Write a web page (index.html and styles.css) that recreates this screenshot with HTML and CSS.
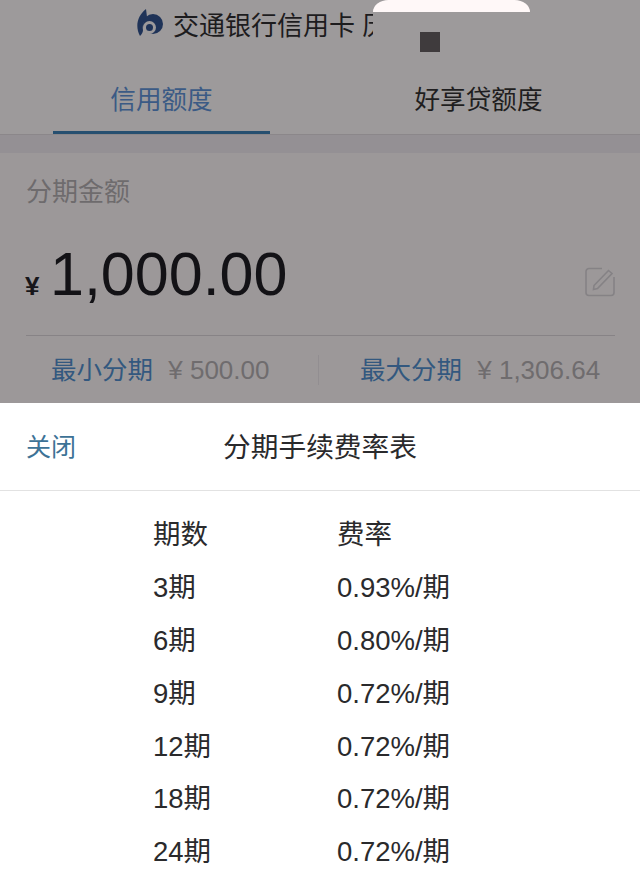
FILE: index.html
```html
<!DOCTYPE html>
<html lang="zh-CN">
<head>
  <meta charset="UTF-8" />
  <title>分期手续费率表</title>
  <link rel="stylesheet" href="styles.css">
</head>
<body>
  <div class="screen">
    <div class="backdrop">
      <div class="topbar">
        <svg class="logo" viewBox="0 0 28 28" width="28" height="28">
          <path fill="#1f3358" d="M4 27C-1 18 1 7 10 0l1 8C8 12 6 16 7 21c0 2-1 4-3 6z"/>
          <circle cx="17" cy="15" r="10" fill="#1f3358"/>
          <circle cx="13.500" cy="18.500" r="6.500" fill="#9d9a9b"/>
          <circle cx="13.500" cy="18.500" r="3.500" fill="#1f3358"/>
        </svg>
        <span class="bank-name">交通银行信用卡 历</span>
      </div>

      <div class="tabs">
        <div class="tab tab-active"><span>信用额度</span></div>
        <div class="tab tab-other"><span>好享贷额度</span></div>
      </div>

      <div class="card">
        <div class="card-label">分期金额</div>
        <div class="amount-row">
          <span class="currency">¥</span>
          <span class="amount">1,000.00</span>
          <svg class="edit-icon" viewBox="0 0 30 30" width="30" height="30" fill="none" stroke="#858285">
            <path stroke-width="1.6" d="M17 1.500H4A3 3 0 0 0 1 4.500V25.500A3 3 0 0 0 4 28.500H26A3 3 0 0 0 29 25.500V10"/>
            <path stroke-width="1.6" d="M9 18.500L23.500 3.500L27 6.500L12.500 21.500L8.500 22.500Z"/>
          </svg>
        </div>
        <div class="limits">
          <div class="limit">
            <span class="limit-name">最小分期</span>
            <span class="limit-value">¥ 500.00</span>
          </div>
          <div class="limit limit-max">
            <span class="limit-name">最大分期</span>
            <span class="limit-value">¥ 1,306.64</span>
          </div>
        </div>
      </div>
    </div>

    <div class="sheet">
      <div class="sheet-head">
        <span class="close">关闭</span>
        <span class="sheet-title">分期手续费率表</span>
      </div>
      <div class="rates">
        <div>期数</div><div>费率</div>
        <div>3期</div><div>0.93%/期</div>
        <div>6期</div><div>0.80%/期</div>
        <div>9期</div><div>0.72%/期</div>
        <div>12期</div><div>0.72%/期</div>
        <div>18期</div><div>0.72%/期</div>
        <div>24期</div><div>0.72%/期</div>
      </div>
    </div>

    <!-- blanked out part of the screenshot, sits over the title -->
    <div class="blank"></div>
    <div class="blank-white"></div>
    <div class="blank-square"></div>
  </div>
</body>
</html>
```

FILE: styles.css
```css
* {
  box-sizing: border-box;
}

body {
  margin: 0;
  background-color: #fff;
  color: #2a2a2c;
  font-family: "Liberation Sans", "Noto Sans CJK SC", sans-serif;
}

.screen {
  position: relative;
  width: 640px;
  height: 878px;
  overflow: hidden;
}

.backdrop {
  height: 403px;
  background-color: #949094;
}

.topbar {
  display: flex;
  align-items: center;
  gap: 9px;
  height: 50px;
  padding: 0 0 4px 136px;
  background-color: #9d9a9b;
}

.logo {
  flex: none;
}

.bank-name {
  font-size: 26px;
  color: #1d1c1e;
  white-space: nowrap;
}

.tabs {
  display: flex;
  height: 85px;
  background-color: #9d9a9b;
  border-bottom: 1px solid #8b878a;
}

.tab {
  flex: 1;
  display: flex;
  justify-content: center;
  padding-top: 33px;
  font-size: 25.6px;
  line-height: 34px;
  color: #1f1e20;
}

.tab-active {
  flex: none;
  width: 217px;
  height: 84px;
  margin: 0 50px 0 53px;
  color: #3b5a85;
  border-bottom: 3px solid #264f70;
}

.tab-other {
  padding-right: 3px;
}

.card {
  margin-top: 18px;
  height: 250px;
  padding: 0 25px 0 26px;
  background-color: #9c9899;
}

.card-label {
  padding-top: 21px;
  font-size: 26px;
  line-height: 36px;
  color: #6e6b6d;
}

.amount-row {
  display: flex;
  align-items: baseline;
  height: 126px;
  padding-top: 28px;
  border-bottom: 1px solid #878386;
}

.currency {
  width: 24px;
  margin-left: -1px;
  margin-right: 1px;
  font-size: 26px;
  font-weight: bold;
  color: #17161a;
}

.amount {
  font-size: 61px;
  line-height: 72px;
  color: #131216;
}

.edit-icon {
  margin-left: auto;
  align-self: flex-start;
  margin-top: 29px;
}

.limits {
  display: flex;
  height: 67px;
  padding-top: 19px;
}

.limit {
  width: 293px;
  height: 30px;
  padding-left: 25px;
  font-size: 26px;
  line-height: 30px;
  border-right: 1px solid #928e91;
  white-space: nowrap;
}

.limit-max {
  width: auto;
  padding-left: 41px;
  border-right: none;
}

.limit-name {
  margin-right: 8px;
  font-size: 25.500px;
  color: #33587f;
}

.limit-value {
  color: #6f6c6e;
}

.sheet {
  height: 475px;
  background-color: #fff;
}

.sheet-head {
  position: relative;
  display: flex;
  justify-content: center;
  align-items: center;
  height: 88px;
  border-bottom: 1px solid #e2e2e2;
}

.close {
  position: absolute;
  left: 26px;
  margin-bottom: 3px;
  font-size: 25px;
  color: #3d7296;
}

.sheet-title {
  margin-bottom: 3px;
  font-size: 27.700px;
  color: #2a2a2c;
}

.rates {
  display: grid;
  grid-template-columns: 184px 1fr;
  grid-auto-rows: 52.800px;
  align-items: center;
  padding: 15px 0 0 153px;
  font-size: 27.500px;
}

.blank {
  position: absolute;
  left: 373px;
  top: 12px;
  width: 157px;
  height: 40px;
  background-color: #9d9a9b;
}

.blank-white {
  position: absolute;
  left: 373px;
  top: 0;
  width: 157px;
  height: 12px;
  background-color: #fff8f8;
  border-radius: 18px 18px 0 0 / 14px 14px 0 0;
}

.blank-square {
  position: absolute;
  left: 420px;
  top: 32px;
  width: 20px;
  height: 20px;
  background-color: #3f3b3d;
}
```
